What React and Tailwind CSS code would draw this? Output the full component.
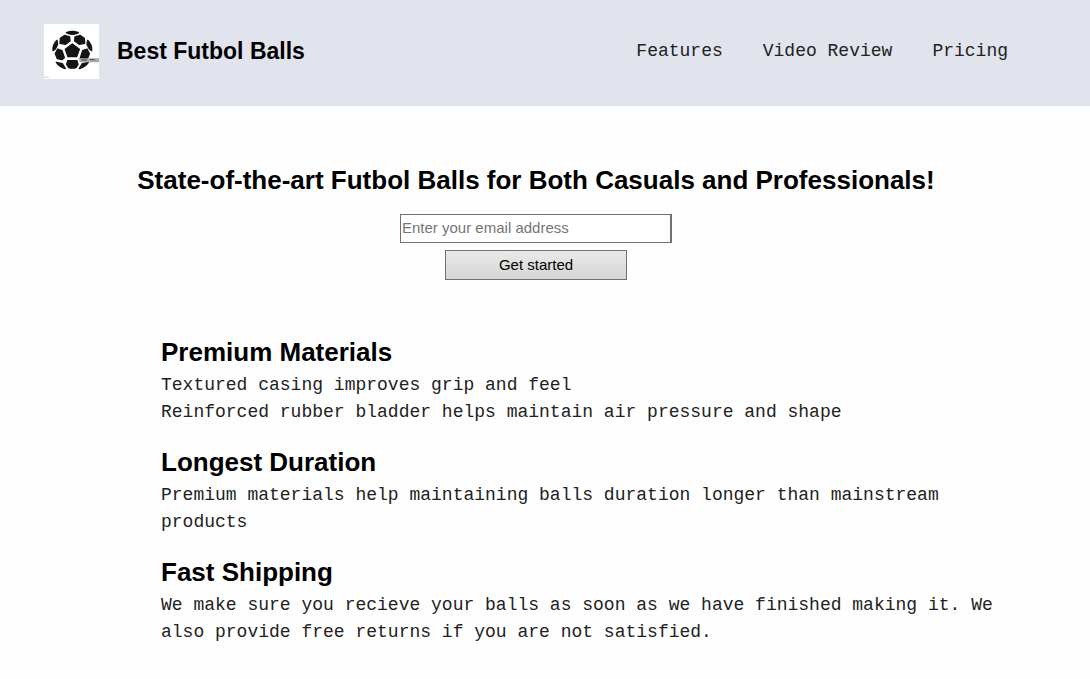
const links = [
  { label: "Features", href: "#features" },
  { label: "Video Review", href: "#video" },
  { label: "Pricing", href: "#pricing" },
];

const features = [
  {
    title: "Premium Materials",
    lines: [
      "Textured casing improves grip and feel",
      "Reinforced rubber bladder helps maintain air pressure and shape",
    ],
  },
  {
    title: "Longest Duration",
    lines: ["Premium materials help maintaining balls duration longer than mainstream products"],
  },
  {
    title: "Fast Shipping",
    lines: [
      "We make sure you recieve your balls as soon as we have finished making it. We also provide free returns if you are not satisfied.",
    ],
  },
];

function Logo() {
  return (
    <svg viewBox="0 0 165 165" role="img" aria-label="Football logo" className="size-[55px] shrink-0 bg-white">
      <g fill="#151515" stroke="#151515" strokeWidth="4" strokeLinejoin="round">
        <path d="M67 26 Q85 19 103 26 L97 29 Q85 33 73 29Z" />
        <path d="M49 43 L62 34 L77 39 L78 51 L64 61 L48 58Z" />
        <path d="M121 43 L108 34 L93 39 L92 51 L106 61 L122 58Z" />
        <path d="M85 60 L106 76 L98 98 L72 98 L64 76Z" />
        <path d="M39 49 L41 61 L34 75 L27 80 Q26 62 39 49Z" />
        <path d="M131 49 L129 61 L136 75 L143 80 Q144 62 131 49Z" />
        <path d="M41 75 L54 80 L61 101 L54 107 L40 104 L34 89Z" />
        <path d="M129 75 L116 80 L109 101 L116 107 L130 104 L136 89Z" />
        <path d="M71 110 H99 L102 121 L96 131 Q85 134 74 131 L68 121Z" />
        <path d="M37 115 L55 119 L64 134 Q46 129 37 115Z" />
        <path d="M133 115 L115 119 L106 134 Q124 129 133 115Z" />
      </g>
      <path d="M103 103 H165 V115 H108Z" fill="#aaa" />
      <path d="M112 108 H129 M138 107 H152" stroke="#444" strokeWidth="3" />
      <path d="M0 160 H15" stroke="#bbb" strokeWidth="2" />
    </svg>
  );
}

export default function App() {
  return (
    <div className="min-h-screen bg-[#fefefe] font-['Liberation_Sans',Arial,sans-serif] text-black">
      <header className="flex items-start justify-between bg-[#e1e4ec] pt-6 pr-[82px] pb-[27px] pl-11">
        <div className="flex items-center gap-[18px]">
          <Logo />
          <h1 className="text-[23px] font-bold whitespace-nowrap">Best Futbol Balls</h1>
        </div>
        <nav className="flex h-[55px] items-center gap-10 font-['Liberation_Mono','Courier_New',monospace] text-[18px] text-[#222]">
          {links.map((link) => (
            <a key={link.label} href={link.href} className="whitespace-nowrap">
              {link.label}
            </a>
          ))}
        </nav>
      </header>

      <main className="pr-[18px]">
        <section className="flex flex-col items-center pt-[58px]">
          <h2 className="text-center text-[26px] leading-8 font-bold">
            State-of-the-art Futbol Balls for Both Casuals and Professionals!
          </h2>
          <form className="mt-[18px] flex flex-col items-center gap-[7px]" onSubmit={(e) => e.preventDefault()}>
            <input
              type="email"
              aria-label="Email address"
              placeholder="Enter your email address"
              className="h-[29px] w-[272px] border border-r-2 border-[#707070] bg-white px-px pb-0.5 text-[15px] placeholder:text-[#757575]"
            />
            <button
              type="submit"
              className="h-[30px] w-[182px] border border-[#707070] bg-linear-to-b from-[#e9e9e9] to-[#d6d6d6] text-[15px]"
            >
              Get started
            </button>
          </form>
        </section>

        <section id="features" className="flex flex-col gap-5 pt-14 pr-12 pb-8 pl-[161px]">
          {features.map((feature) => (
            <article key={feature.title}>
              <h2 className="mb-1 text-[26px] leading-8 font-bold">{feature.title}</h2>
              {feature.lines.map((line) => (
                <p
                  key={line}
                  className="font-['Liberation_Mono','Courier_New',monospace] text-[18px] leading-[27px] text-[#222]"
                >
                  {line}
                </p>
              ))}
            </article>
          ))}
        </section>
      </main>
    </div>
  );
}
